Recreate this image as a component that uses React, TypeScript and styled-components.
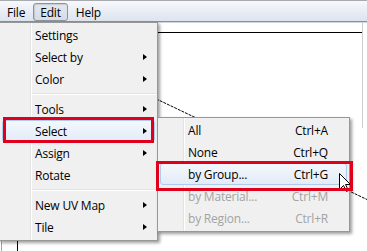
import React from "react";
import styled, { createGlobalStyle, css } from "styled-components";

const Global = createGlobalStyle`
  html, body { margin: 0; padding: 0; background: #fff; }
  body {
    font-family: "Open Sans", "Noto Sans", sans-serif;
    font-size: 12px;
    letter-spacing: -0.2px;
    color: #000;
    overflow: hidden;
  }
`;

const Window = styled.div`
  position: relative;
  width: 367px;
  height: 251px;
  display: flex;
  flex-direction: column;
  overflow: hidden;
  background: #fff;
`;

const MenuBar = styled.div`
  height: 22px;
  box-sizing: border-box;
  border-top: 1px solid #a8abb0;
  border-bottom: 1px solid #8c8f94;
  background: linear-gradient(#f6f8fb, #dce4ef);
  display: flex;
  align-items: flex-start;
  padding-top: 2px;
  gap: 1px;
`;

const BarItem = styled.div<{ $open?: boolean }>`
  height: 18px;
  padding: 0 6px;
  display: flex;
  align-items: center;
  box-sizing: border-box;
  border: 1px solid transparent;
  border-radius: 3px;
  ${(p) =>
    p.$open &&
    css`
      border-color: #8d949e;
      background: linear-gradient(#e3e8ef, #d5dce6);
      box-shadow: inset 1px 1px 1px rgba(0, 0, 0, 0.12);
    `}
`;

const Canvas = styled.div`
  flex: 1;
  position: relative;
  margin-left: 1px;
  border-left: 1px solid #a3a3a3;
  border-top: 1px solid #d3d6da;
`;

const Drawing = styled.svg`
  display: block;
  width: 100%;
  height: 100%;
`;

const Panel = styled.div<{ $x: number; $y: number; $w: number; $g: number }>`
  position: absolute;
  left: ${(p) => p.$x}px;
  top: ${(p) => p.$y}px;
  width: ${(p) => p.$w}px;
  box-sizing: border-box;
  border: 1px solid #979797;
  padding: 1px 0 2px;
  display: flex;
  flex-direction: column;
  background: linear-gradient(
      to right,
      transparent ${(p) => p.$g - 1}px,
      #e2e3e3 ${(p) => p.$g - 1}px,
      #e2e3e3 ${(p) => p.$g}px,
      #ffffff ${(p) => p.$g}px,
      #ffffff ${(p) => p.$g + 1}px,
      transparent ${(p) => p.$g + 1}px
    ),
    #f0f0f0;
  box-shadow: 2px 2px 3px rgba(0, 0, 0, 0.38);
`;

const Item = styled.div<{ $pad: number; $hl?: boolean; $disabled?: boolean }>`
  height: 22px;
  margin: 0 2px;
  box-sizing: border-box;
  border: 1px solid transparent;
  border-radius: 3px;
  display: flex;
  align-items: center;
  padding-left: ${(p) => p.$pad}px;
  padding-right: 7px;
  white-space: nowrap;
  color: ${(p) => (p.$disabled ? "#a3a3a3" : "#000")};
  ${(p) =>
    p.$hl &&
    css`
      border-color: #aecbee;
      background: linear-gradient(#f4f8fd, #e2ebf7);
    `}
`;

const Label = styled.span`
  flex: 1;
`;

const Shortcut = styled.span`
  margin-right: 11px;
`;

const Arrow = styled.span`
  width: 0;
  height: 0;
  border-left: 4px solid #000;
  border-top: 3.5px solid transparent;
  border-bottom: 3.5px solid transparent;
`;

const Separator = styled.div<{ $g: number }>`
  height: 8px;
  display: flex;
  align-items: center;
  padding-left: ${(p) => p.$g + 1}px;
  &::after {
    content: "";
    flex: 1;
    height: 1px;
    background: #e2e3e3;
    border-bottom: 1px solid #ffffff;
  }
`;

const Annotation = styled.div<{ $x: number; $y: number; $w: number; $h: number }>`
  position: absolute;
  left: ${(p) => p.$x}px;
  top: ${(p) => p.$y}px;
  width: ${(p) => p.$w}px;
  height: ${(p) => p.$h}px;
  box-sizing: border-box;
  border: 3px solid #e0001b;
  pointer-events: none;
`;

const Pointer = styled.svg`
  position: absolute;
  left: 339px;
  top: 173px;
`;

type Entry =
  | { kind: "sep" }
  | { kind: "item"; label: string; sub?: boolean; key?: string; hl?: boolean; disabled?: boolean };

const editMenu: Entry[] = [
  { kind: "item", label: "Settings" },
  { kind: "item", label: "Select by", sub: true },
  { kind: "item", label: "Color", sub: true },
  { kind: "sep" },
  { kind: "item", label: "Tools", sub: true },
  { kind: "item", label: "Select", sub: true, hl: true },
  { kind: "item", label: "Assign", sub: true },
  { kind: "item", label: "Rotate" },
  { kind: "sep" },
  { kind: "item", label: "New UV Map", sub: true },
  { kind: "item", label: "Tile", sub: true },
];

const selectMenu: Entry[] = [
  { kind: "item", label: "All", key: "Ctrl+A" },
  { kind: "item", label: "None", key: "Ctrl+Q" },
  { kind: "item", label: "by Group...", key: "Ctrl+G", hl: true },
  { kind: "item", label: "by Material...", key: "Ctrl+M", disabled: true },
  { kind: "item", label: "by Region...", key: "Ctrl+R", disabled: true },
];

function Menu({ entries, x, y, w, g }: { entries: Entry[]; x: number; y: number; w: number; g: number }) {
  return (
    <Panel $x={x} $y={y} $w={w} $g={g}>
      {entries.map((e, i) =>
        e.kind === "sep" ? (
          <Separator key={i} $g={g} />
        ) : (
          <Item key={i} $pad={g + 1} $hl={e.hl} $disabled={e.disabled}>
            <Label>{e.label}</Label>
            {e.key && <Shortcut>{e.key}</Shortcut>}
            {e.sub && <Arrow />}
          </Item>
        )
      )}
    </Panel>
  );
}

export default function App() {
  return (
    <>
      <Global />
      <Window>
        <MenuBar>
          <BarItem>File</BarItem>
          <BarItem $open>Edit</BarItem>
          <BarItem>Help</BarItem>
        </MenuBar>
        <Canvas>
          <Drawing>
            <line x1="0" y1="9.5" x2="360" y2="9.5" stroke="#000" strokeWidth="1" />
            <line x1="360.5" y1="0" x2="360.5" y2="105" stroke="#cfcfcf" strokeWidth="1" />
            <line x1="15.5" y1="9" x2="15.5" y2="240" stroke="#000" strokeWidth="1" />
            <line
              x1="100"
              y1="50"
              x2="366"
              y2="177"
              stroke="#000"
              strokeWidth="1"
              strokeDasharray="3 1"
            />
          </Drawing>
        </Canvas>

        <Menu entries={editMenu} x={-1} y={22} w={159} g={31} />
        <Menu entries={selectMenu} x={157} y={117} w={193} g={26} />

        <Pointer width="13" height="20" viewBox="0 0 13 20">
          <polygon
            points="0.5,0.5 0.5,16.5 4.5,12.5 7.5,18.5 9.5,17.5 6.5,11.5 11.5,11.5"
            fill="#fff"
            stroke="#000"
            strokeWidth="1"
            strokeLinejoin="miter"
          />
        </Pointer>

        <Annotation $x={3} $y={117} $w={151} $h={26} />
        <Annotation $x={156} $y={161} $w={197} $h={30} />
      </Window>
    </>
  );
}
